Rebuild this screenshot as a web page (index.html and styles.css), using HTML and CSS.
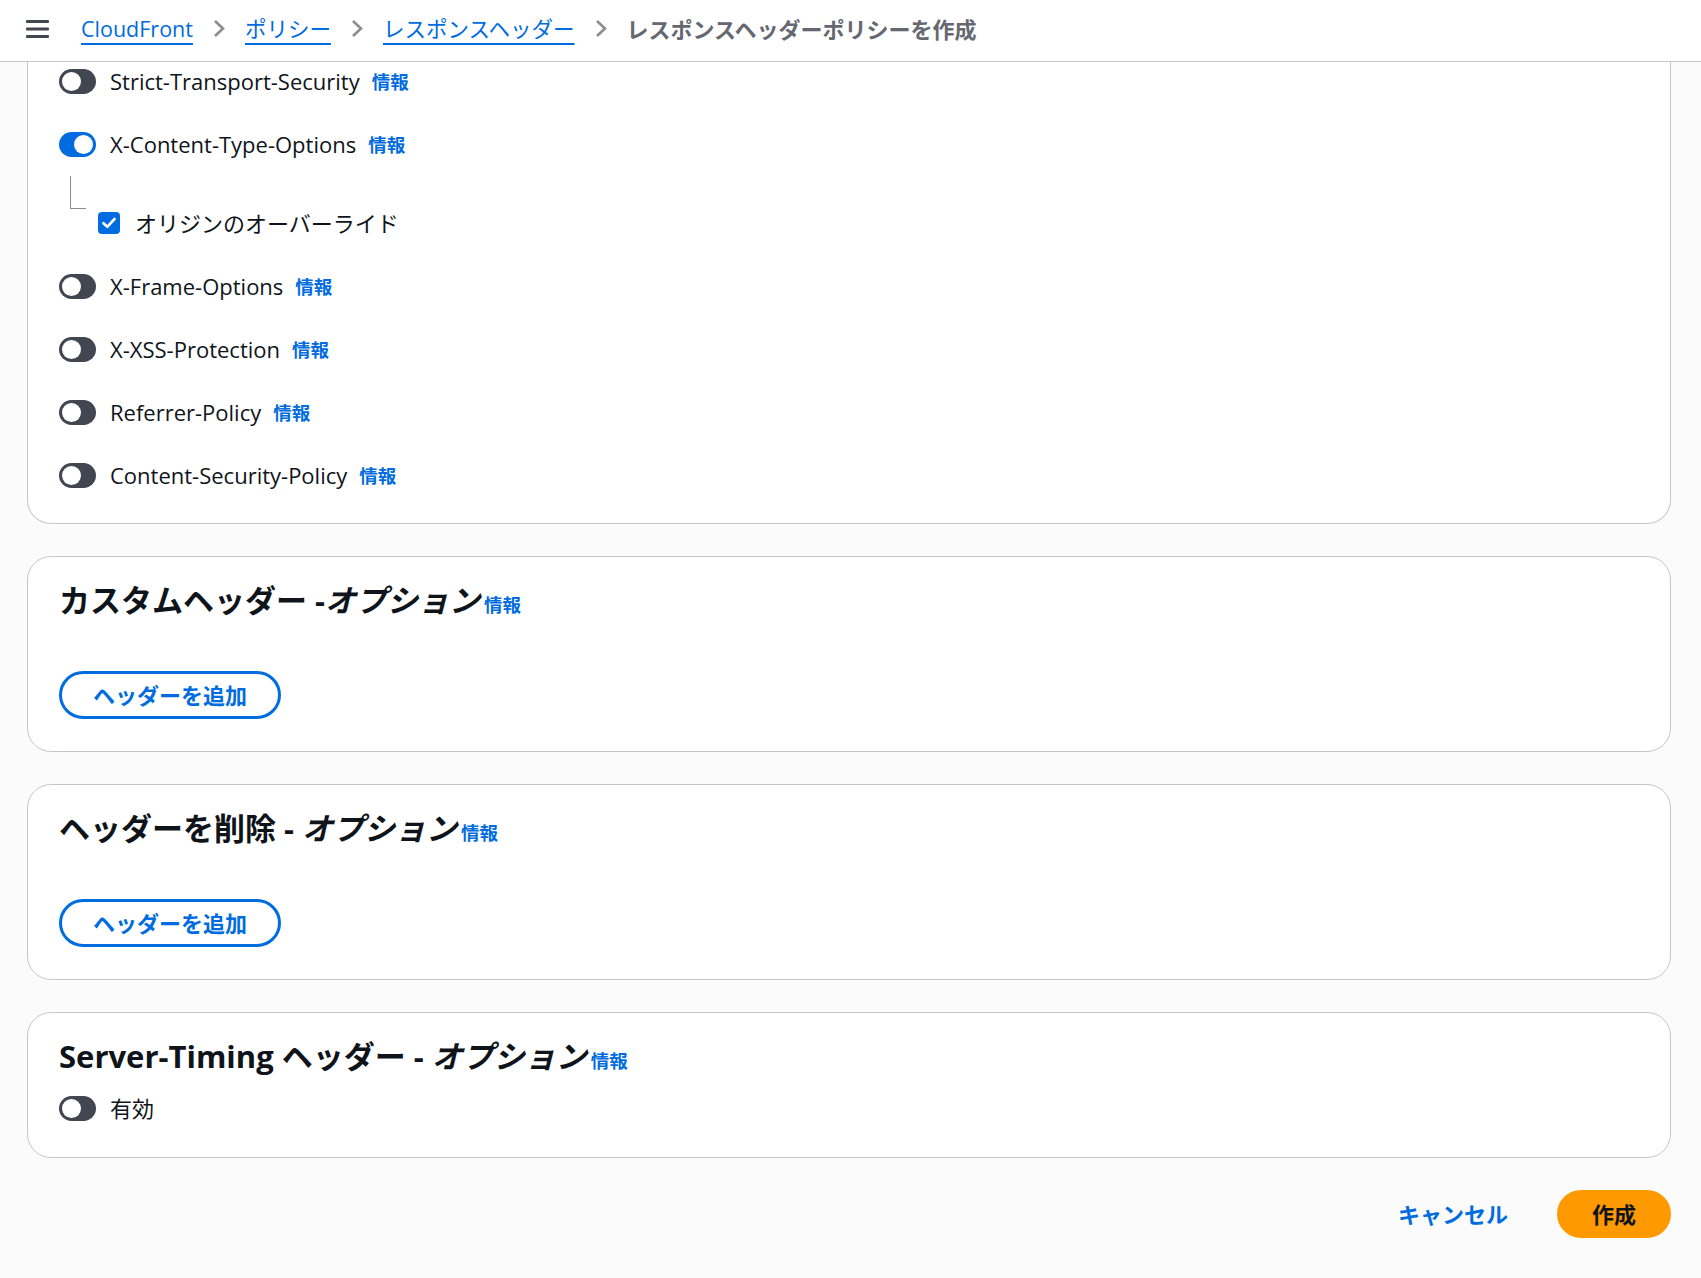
FILE: index.html
```html
<!DOCTYPE html>
<html lang="ja">
<head>
<meta charset="utf-8">
<title>レスポンスヘッダーポリシーを作成</title>
<link rel="stylesheet" href="styles.css">
</head>
<body>
<header class="topbar">
  <button class="menu" aria-label="メニュー">
    <svg width="23" height="20" viewBox="0 0 23 20"><rect x="0" y="1" width="23" height="3" rx="1" fill="#424650"/><rect x="0" y="8.5" width="23" height="3" rx="1" fill="#424650"/><rect x="0" y="16" width="23" height="3" rx="1" fill="#424650"/></svg>
  </button>
  <nav class="crumbs">
    <a href="#" class="crumb">CloudFront</a>
    <span class="chev"><svg width="12" height="19" viewBox="0 0 12 19"><path d="M2 2 L10 9.5 L2 17" fill="none" stroke="#8c8c94" stroke-width="2.6"/></svg></span>
    <a href="#" class="crumb">ポリシー</a>
    <span class="chev"><svg width="12" height="19" viewBox="0 0 12 19"><path d="M2 2 L10 9.5 L2 17" fill="none" stroke="#8c8c94" stroke-width="2.6"/></svg></span>
    <a href="#" class="crumb">レスポンスヘッダー</a>
    <span class="chev"><svg width="12" height="19" viewBox="0 0 12 19"><path d="M2 2 L10 9.5 L2 17" fill="none" stroke="#8c8c94" stroke-width="2.6"/></svg></span>
    <span class="current">レスポンスヘッダーポリシーを作成</span>
  </nav>
</header>

<main class="main">
  <section class="card card-clipped">
    <div class="row">
      <span class="toggle"></span><span class="label">Strict-Transport-Security</span><a href="#" class="info">情報</a>
    </div>
    <div class="row row-gap">
      <span class="toggle on"></span><span class="label">X-Content-Type-Options</span><a href="#" class="info">情報</a>
    </div>
    <div class="child">
      <span class="tree"></span>
      <div class="check-row">
        <span class="checkbox"><svg width="14" height="12" viewBox="0 0 14 12"><path d="M1.5 6.2 L5.3 9.8 L12.5 2" fill="none" stroke="#fff" stroke-width="2.6" stroke-linecap="round" stroke-linejoin="round"/></svg></span>
        <span class="label">オリジンのオーバーライド</span>
      </div>
    </div>
    <div class="row row-after-child">
      <span class="toggle"></span><span class="label">X-Frame-Options</span><a href="#" class="info">情報</a>
    </div>
    <div class="row row-gap">
      <span class="toggle"></span><span class="label">X-XSS-Protection</span><a href="#" class="info">情報</a>
    </div>
    <div class="row row-gap">
      <span class="toggle"></span><span class="label">Referrer-Policy</span><a href="#" class="info">情報</a>
    </div>
    <div class="row row-gap">
      <span class="toggle"></span><span class="label">Content-Security-Policy</span><a href="#" class="info">情報</a>
    </div>
  </section>

  <section class="card">
    <h2 class="card-title"><span>カスタムヘッダー -<i>オプション</i></span><a href="#" class="info info-h">情報</a></h2>
    <button class="btn-outline">ヘッダーを追加</button>
  </section>

  <section class="card">
    <h2 class="card-title"><span>ヘッダーを削除 - <i>オプション</i></span><a href="#" class="info info-h">情報</a></h2>
    <button class="btn-outline">ヘッダーを追加</button>
  </section>

  <section class="card card-server">
    <h2 class="card-title"><span>Server-Timing ヘッダー - <i>オプション</i></span><a href="#" class="info info-h">情報</a></h2>
    <div class="row row-server">
      <span class="toggle"></span><span class="label">有効</span>
    </div>
  </section>

  <div class="actions">
    <button class="btn-link">キャンセル</button>
    <button class="btn-primary">作成</button>
  </div>
</main>
</body>
</html>
```

FILE: styles.css
```css
* { box-sizing: border-box; }

html, body {
  margin: 0;
  padding: 0;
  background: #fbfbfb;
  font-family: "Open Sans", "Noto Sans CJK JP", sans-serif;
  color: #0f141a;
  font-size: 22px;
}

.topbar {
  height: 62px;
  background: #ffffff;
  border-bottom: 1px solid #c6c6cd;
  display: flex;
  align-items: center;
  padding-left: 26px;
  padding-bottom: 4px;
}

.menu {
  border: 0;
  background: transparent;
  padding: 0;
  width: 23px;
  height: 20px;
  display: flex;
  margin-right: 32px;
}

.crumbs {
  display: flex;
  align-items: center;
  gap: 20px;
  font-size: 21.5px;
  line-height: 30px;
}

.crumb {
  color: #006ce0;
  text-decoration: underline;
  text-decoration-thickness: 2px;
  text-underline-offset: 6px;
}

.chev { display: flex; align-items: center; }

.current {
  color: #656871;
  font-weight: 700;
  font-size: 22px;
}

.main {
  padding: 0 30px 40px 27px;
}

.card {
  background: #ffffff;
  border: 1px solid #c6c6cd;
  border-radius: 24px;
  padding: 26px 31px 32px 31px;
  margin-top: 32px;
}

.card-clipped {
  border-top: 0;
  border-top-left-radius: 0;
  border-top-right-radius: 0;
  margin-top: 0;
  padding-top: 4px;
  padding-bottom: 33px;
}

.card-server { padding-bottom: 34px; }

.row {
  display: flex;
  align-items: center;
  height: 30px;
}

.row-gap { margin-top: 33px; }
.row-after-child { margin-top: 35px; }
.row-server { margin-top: 15px; }

.toggle {
  width: 37px;
  height: 25px;
  border-radius: 13px;
  background: #424650;
  position: relative;
  flex: none;
  margin-right: 14px;
}

.toggle::after {
  content: "";
  position: absolute;
  left: 3px;
  top: 3px;
  width: 19px;
  height: 19px;
  border-radius: 50%;
  background: #ffffff;
}

.toggle.on { background: #006ce0; }
.toggle.on::after { left: 15px; }

.label {
  font-size: 22px;
  line-height: 30px;
  color: #0f141a;
}

.info {
  font-size: 18.5px;
  font-weight: 700;
  color: #006ce0;
  text-decoration: none;
  margin-left: 12px;
}

.child {
  display: flex;
  flex-direction: column;
  margin-top: 17px;
}

.tree {
  display: block;
  margin-left: 11px;
  width: 16px;
  height: 33px;
  border-left: 1px solid #8c8c94;
  border-bottom: 1px solid #8c8c94;
}

.check-row {
  display: flex;
  align-items: center;
  margin-left: 39px;
  margin-top: 1px;
  height: 26px;
}

.checkbox {
  width: 22px;
  height: 22px;
  border-radius: 4px;
  background: #006ce0;
  display: flex;
  align-items: center;
  justify-content: center;
  flex: none;
  margin-right: 15px;
}

.card-title {
  margin: 0;
  font-size: 31px;
  line-height: 34px;
  font-weight: 700;
  color: #0f141a;
  display: flex;
  align-items: baseline;
}

.card-title i { font-style: italic; }

.info-h { margin-left: 4px; }

.btn-outline {
  margin-top: 49px;
  font-family: inherit;
  font-size: 22px;
  font-weight: 700;
  line-height: 30px;
  color: #006ce0;
  background: #ffffff;
  border: 3px solid #006ce0;
  border-radius: 30px;
  padding: 6px 31px;
  display: block;
}

.actions {
  display: flex;
  justify-content: flex-end;
  align-items: center;
  gap: 16px;
  margin-top: 32px;
}

.btn-link {
  font-family: inherit;
  font-size: 22px;
  font-weight: 700;
  line-height: 30px;
  color: #006ce0;
  background: transparent;
  border: 3px solid transparent;
  padding: 6px 30px;
}

.btn-primary {
  font-family: inherit;
  font-size: 22px;
  font-weight: 700;
  line-height: 30px;
  color: #0f141a;
  background: #ff9900;
  border: 3px solid #ff9900;
  border-radius: 30px;
  padding: 6px 32px;
}
```
